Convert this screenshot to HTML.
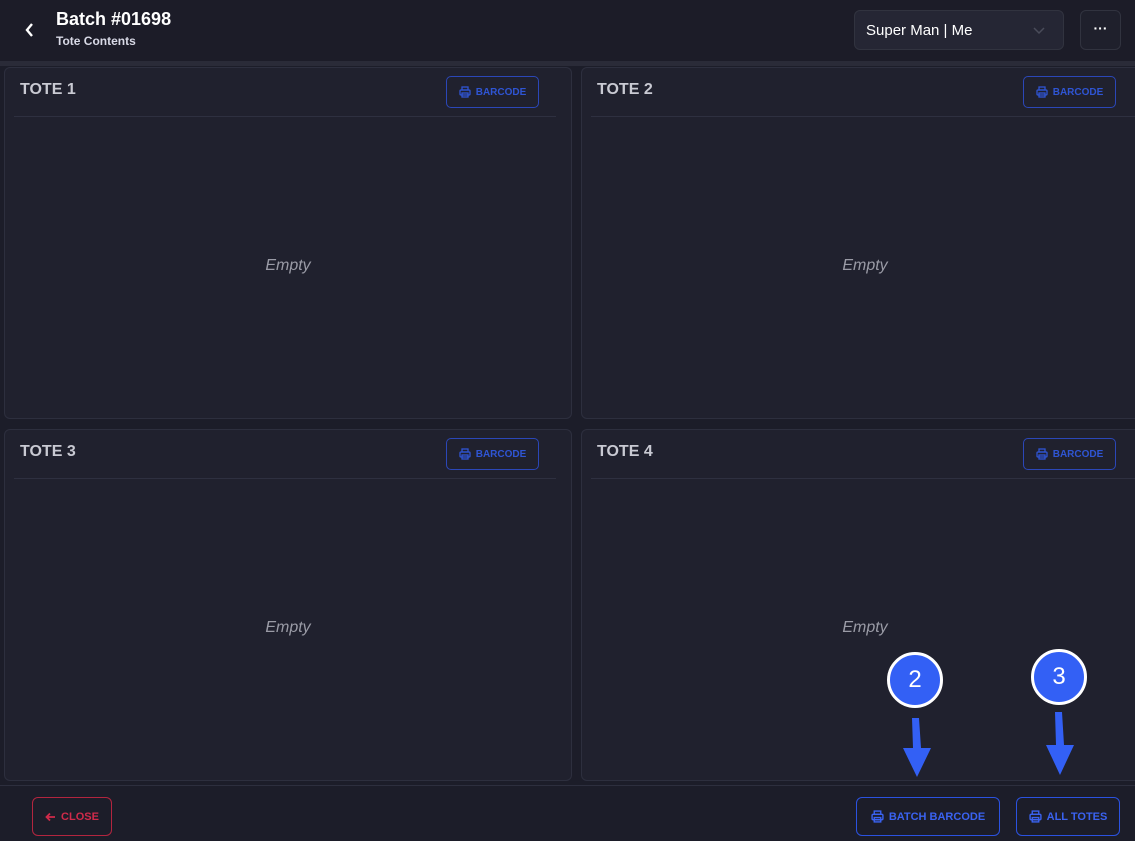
<!DOCTYPE html>
<html><head><meta charset="utf-8"><style>
*{box-sizing:border-box;margin:0;padding:0}
body{width:1135px;height:841px;background:#1c1d29;font-family:"Liberation Sans",sans-serif;position:relative;overflow:hidden;color:#fff}
.hdr{position:absolute;left:0;top:0;width:1135px;height:61px;background:#1c1c28}
.band{position:absolute;left:0;top:61px;width:1135px;height:5px;background:#2a2b38}
.card{position:absolute;background:#20212e;border:1px solid #2d2f3e;border-radius:6px}
.card .t{position:absolute;left:15px;top:13px;font-size:16px;font-weight:bold;color:#c9cad3}
.card .line{position:absolute;left:9px;top:48px;height:1px;background:#2e3040}
.bc{position:absolute;top:8px;width:93px;height:32px;border:1px solid #2b47b8;border-radius:5px;color:#2f55d4;font-size:10px;font-weight:bold;display:flex;align-items:center;justify-content:center;gap:5px}
.empty{position:absolute;width:100%;text-align:center;font-style:italic;color:#9a9ba6;font-size:16px}
.btn{position:absolute;top:797px;height:39px;border:1px solid #2b52e0;border-radius:6px;color:#3a62f0;font-size:11px;font-weight:bold;display:flex;align-items:center;justify-content:center;gap:5px}
.circ{position:absolute;width:56px;height:56px;border-radius:50%;background:#3360f5;border:3px solid #fff;color:#fff;font-size:24px;display:flex;align-items:center;justify-content:center}
</style></head><body>
<div class="hdr">
<svg style="position:absolute;left:24px;top:22px" width="12" height="16" viewBox="0 0 12 16"><path d="M8 2L3 8l5 6" stroke="#fff" stroke-width="2.4" fill="none"/></svg>
<div style="position:absolute;left:56px;top:9px;font-size:18px;font-weight:bold">Batch #01698</div>
<div style="position:absolute;left:56px;top:34px;font-size:12px;font-weight:bold;color:#d8d9e6">Tote Contents</div>
<div style="position:absolute;left:854px;top:10px;width:210px;height:40px;background:#252634;border:1px solid #31333f;border-radius:6px;font-size:15px;padding:11px 11px">Super Man | Me<svg style="position:absolute;right:18px;top:16px" width="12" height="8"><path d="M1 1l5 5 5-5" stroke="#4a4c5a" stroke-width="1.5" fill="none"/></svg></div>
<div style="position:absolute;left:1080px;top:10px;width:41px;height:40px;background:#1f202c;border:1px solid #31333f;border-radius:6px;text-align:center;font-size:14px;line-height:34px;font-weight:bold">···</div>
</div>
<div class="band"></div>

<div class="card" style="left:4px;top:67px;width:568px;height:352px"><div class="t">TOTE 1</div><div class="bc" style="left:441px"><svg width="12" height="12" viewBox="0 0 12 12" fill="none" stroke="#2f55d4" stroke-width="1.3"><rect x="3" y="1" width="6" height="3"/><rect x="1" y="4" width="10" height="5" rx="1"/><rect x="3" y="7" width="6" height="4"/></svg>BARCODE</div><div class="line" style="width:542px"></div><div class="empty" style="top:189px">Empty</div></div>
<div class="card" style="left:581px;top:67px;width:568px;height:352px"><div class="t">TOTE 2</div><div class="bc" style="left:441px"><svg width="12" height="12" viewBox="0 0 12 12" fill="none" stroke="#2f55d4" stroke-width="1.3"><rect x="3" y="1" width="6" height="3"/><rect x="1" y="4" width="10" height="5" rx="1"/><rect x="3" y="7" width="6" height="4"/></svg>BARCODE</div><div class="line" style="width:545px"></div><div class="empty" style="top:189px">Empty</div></div>
<div class="card" style="left:4px;top:429px;width:568px;height:352px"><div class="t">TOTE 3</div><div class="bc" style="left:441px"><svg width="12" height="12" viewBox="0 0 12 12" fill="none" stroke="#2f55d4" stroke-width="1.3"><rect x="3" y="1" width="6" height="3"/><rect x="1" y="4" width="10" height="5" rx="1"/><rect x="3" y="7" width="6" height="4"/></svg>BARCODE</div><div class="line" style="width:542px"></div><div class="empty" style="top:189px">Empty</div></div>
<div class="card" style="left:581px;top:429px;width:568px;height:352px"><div class="t">TOTE 4</div><div class="bc" style="left:441px"><svg width="12" height="12" viewBox="0 0 12 12" fill="none" stroke="#2f55d4" stroke-width="1.3"><rect x="3" y="1" width="6" height="3"/><rect x="1" y="4" width="10" height="5" rx="1"/><rect x="3" y="7" width="6" height="4"/></svg>BARCODE</div><div class="line" style="width:545px"></div><div class="empty" style="top:189px">Empty</div></div>

<div style="position:absolute;left:0;top:785px;width:1135px;height:1px;background:#2d2f3e"></div>
<div class="btn" style="left:32px;width:80px;border-color:#b3253f;color:#d02a4a"><svg width="11" height="10" viewBox="0 0 11 10"><path d="M10 5H2M5 1.5L1.5 5 5 8.5" stroke="#d02a4a" stroke-width="1.8" fill="none"/></svg>CLOSE</div>
<div class="btn" style="left:856px;width:144px"><svg width="13" height="13" viewBox="0 0 12 12" fill="none" stroke="#3a62f0" stroke-width="1.3"><rect x="3" y="1" width="6" height="3"/><rect x="1" y="4" width="10" height="5" rx="1"/><rect x="3" y="7" width="6" height="4"/></svg>BATCH BARCODE</div>
<div class="btn" style="left:1016px;width:104px"><svg width="13" height="13" viewBox="0 0 12 12" fill="none" stroke="#3a62f0" stroke-width="1.3"><rect x="3" y="1" width="6" height="3"/><rect x="1" y="4" width="10" height="5" rx="1"/><rect x="3" y="7" width="6" height="4"/></svg>ALL TOTES</div>

<div class="circ" style="left:887px;top:652px">2</div>
<div class="circ" style="left:1031px;top:649px">3</div>
<svg style="position:absolute;left:0;top:0" width="1135" height="841"><path d="M912 718l7 0 2 30h10l-14 29-14-29h10z" fill="#3360f5"/><path d="M1055 712l7 0 2 33h10l-14 30-14-30h10z" fill="#3360f5"/></svg>
</body></html>
